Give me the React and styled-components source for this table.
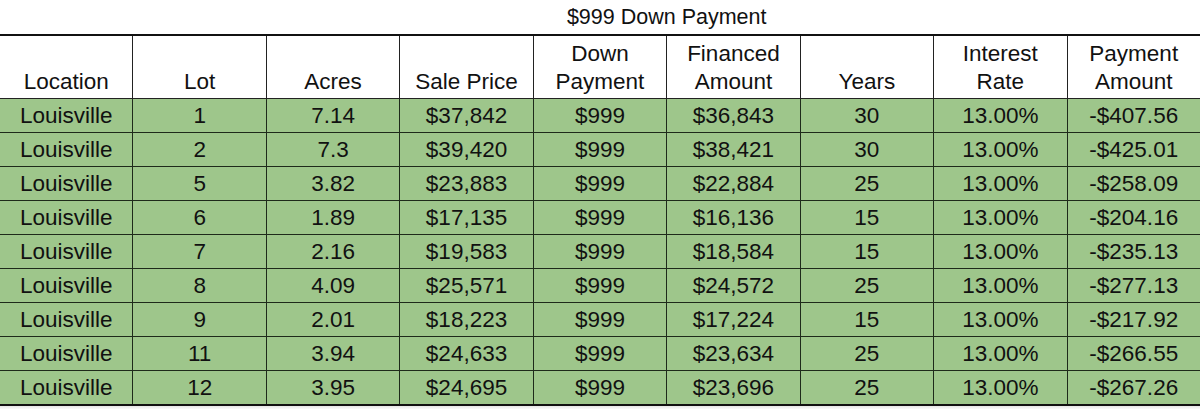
import React from "react";
import styled, { createGlobalStyle } from "styled-components";

const GlobalStyle = createGlobalStyle`
  html, body {
    margin: 0;
    padding: 0;
    background: #fff;
  }
  body {
    font-family: "Liberation Sans", Arial, sans-serif;
    color: #111;
    overflow: hidden;
  }
`;

const Sheet = styled.div`
  width: 1200px;
  overflow: hidden;
`;

const Table = styled.table`
  width: 1202px;
  margin-left: -1px;
  border-collapse: collapse;
  table-layout: fixed;
  font-size: 22.5px;
`;

const TitleCell = styled.td`
  height: 34px;
  padding: 0;
  text-align: center;
  vertical-align: middle;
  font-size: 21.5px;
  border: none;
`;

const HeadRow = styled.tr`
  border-top: 2px solid #111;
`;

const HeadCell = styled.th`
  height: 60px;
  padding: 0 2px 2px;
  font-weight: normal;
  text-align: center;
  vertical-align: bottom;
  line-height: 28px;
  background: #fff;
  border-left: 1.5px solid #222;
  border-right: 1.5px solid #222;
  border-bottom: 1.5px solid #222;
`;

const BodyRow = styled.tr`
  background: #9ec68b;
  &:last-child td {
    border-bottom: 2.5px solid #111;
  }
`;

const Cell = styled.td`
  height: 33px;
  padding: 0 2px;
  text-align: center;
  vertical-align: middle;
  white-space: nowrap;
  border: 1.5px solid #1e2a1a;
`;

const Shadow = styled.div`
  height: 3px;
  background: linear-gradient(#e6e6e6, #fafafa);
`;

const HEADERS = [
  ["Location"],
  ["Lot"],
  ["Acres"],
  ["Sale Price"],
  ["Down", "Payment"],
  ["Financed", "Amount"],
  ["Years"],
  ["Interest", "Rate"],
  ["Payment", "Amount"],
];

const ROWS = [
  [1, "7.14", "$37,842", "$36,843", 30, "-$407.56"],
  [2, "7.3", "$39,420", "$38,421", 30, "-$425.01"],
  [5, "3.82", "$23,883", "$22,884", 25, "-$258.09"],
  [6, "1.89", "$17,135", "$16,136", 15, "-$204.16"],
  [7, "2.16", "$19,583", "$18,584", 15, "-$235.13"],
  [8, "4.09", "$25,571", "$24,572", 25, "-$277.13"],
  [9, "2.01", "$18,223", "$17,224", 15, "-$217.92"],
  [11, "3.94", "$24,633", "$23,634", 25, "-$266.55"],
  [12, "3.95", "$24,695", "$23,696", 25, "-$267.26"],
];

export default function App() {
  return (
    <Sheet>
      <GlobalStyle />
      <Table>
        <tbody>
          <tr>
            <TitleCell />
            <TitleCell />
            <TitleCell />
            <TitleCell colSpan={4}>$999 Down Payment</TitleCell>
            <TitleCell />
            <TitleCell />
          </tr>
          <HeadRow>
            {HEADERS.map((lines, i) => (
              <HeadCell key={i}>
                {lines.map((l, j) => (
                  <div key={j}>{l}</div>
                ))}
              </HeadCell>
            ))}
          </HeadRow>
          {ROWS.map(([lot, acres, price, financed, years, payment]) => (
            <BodyRow key={lot}>
              <Cell>Louisville</Cell>
              <Cell>{lot}</Cell>
              <Cell>{acres}</Cell>
              <Cell>{price}</Cell>
              <Cell>$999</Cell>
              <Cell>{financed}</Cell>
              <Cell>{years}</Cell>
              <Cell>13.00%</Cell>
              <Cell>{payment}</Cell>
            </BodyRow>
          ))}
        </tbody>
      </Table>
      <Shadow />
    </Sheet>
  );
}
